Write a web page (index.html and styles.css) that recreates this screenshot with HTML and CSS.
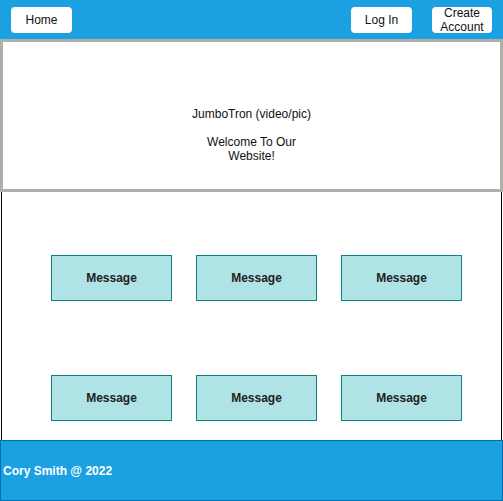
FILE: index.html
```html
<!DOCTYPE html>
<html>
<head>
<meta charset="utf-8">
<link rel="stylesheet" href="styles.css">
</head>
<body>
<div class="page">
  <header class="topbar">
    <div class="btn">Home</div>
    <div class="btn login">Log In</div>
    <div class="btn create">Create<br>Account</div>
  </header>
  <section class="jumbo">
    <p class="jumbo-title">JumboTron (video/pic)</p>
    <p class="jumbo-welcome">Welcome To Our<br>Website!</p>
  </section>
  <main class="content">
    <div class="grid">
      <div class="msg">Message</div>
      <div class="msg">Message</div>
      <div class="msg">Message</div>
      <div class="msg">Message</div>
      <div class="msg">Message</div>
      <div class="msg">Message</div>
    </div>
  </main>
  <footer class="footer">Cory Smith @ 2022</footer>
</div>
</body>
</html>
```
FILE: styles.css
```css
* { box-sizing: border-box; }
html, body { margin: 0; padding: 0; background: #fff; }
body {
  font-family: "Liberation Sans", Arial, sans-serif;
  font-size: 12px;
  color: #000;
}
.page { width: 503px; }
.topbar {
  height: 39px;
  background: #1ba1e2;
  display: flex;
  align-items: flex-start;
  padding: 7px 11px 0 11px;
}
.btn {
  width: 61px;
  height: 26px;
  background: #fff;
  border-radius: 4px;
  display: flex;
  align-items: center;
  justify-content: center;
  text-align: center;
  line-height: 14px;
  color: #111;
}
.login { margin-left: auto; }
.create { width: 60px; margin-left: 20px; }
.jumbo {
  height: 153px;
  border: 3px solid #adb0a8;
  text-align: center;
  padding-top: 65px;
}
.jumbo p { margin: 0; line-height: 14px; color: #111; }
.jumbo-welcome { margin-top: 14px !important; }
.content {
  height: 248px;
  margin: 0 1px;
  border-left: 1px solid #000;
  border-right: 1px solid #000;
  padding: 63px 0 0 49px;
}
.grid {
  display: grid;
  grid-template-columns: repeat(3, 121px);
  grid-auto-rows: 46px;
  column-gap: 24px;
  row-gap: 74px;
}
.msg {
  background: #b0e3e6;
  border: 1px solid #0e8088;
  display: flex;
  align-items: center;
  justify-content: center;
  font-weight: bold;
  color: #222;
}
.footer {
  height: 61px;
  background: #1ba1e2;
  border: 1px solid #006eaf;
  color: #fff;
  font-weight: bold;
  display: flex;
  align-items: center;
  padding-left: 2px;
}
```
